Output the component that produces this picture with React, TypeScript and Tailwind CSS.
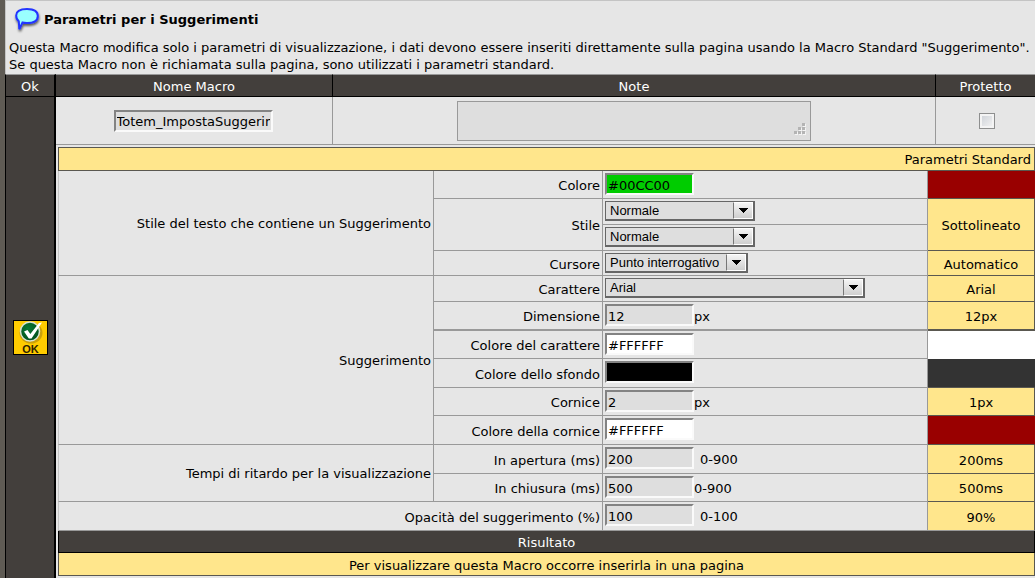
import type { ReactNode } from "react";
import clsx from "clsx";

type Param = {
  id: string;
  label?: string;
  labelSpan?: number;
  wideLabel?: boolean;
  group?: string;
  groupSpan?: number;
  height: string;
  thick?: boolean;
  field: ReactNode;
  standard?: string;
  standardSpan?: number;
  standardColor?: string;
};

type FieldProps = {
  id: string;
  value: string;
  className?: string;
  unit?: string;
  spaced?: boolean;
  label?: string;
};

function TextField({ id, value, className, unit, spaced }: FieldProps) {
  return (
    <div className="flex items-center">
      <input
        id={id}
        type="text"
        defaultValue={value}
        className={clsx(
          "h-[22px] w-[89px] border-2 border-t-[#838383] border-r-[#fafafa] border-b-[#fafafa] border-l-[#838383] px-px pt-0.5 outline-none",
          className ?? "bg-[#dedede]"
        )}
      />
      {unit && <span className={clsx("pt-0.5", spaced && "ml-1.5")}>{unit}</span>}
    </div>
  );
}

function SelectField({ id, value, className, label }: FieldProps) {
  return (
    <div className={clsx("relative", className)}>
      <select
        id={id}
        aria-label={label}
        defaultValue={value}
        className="block h-5 w-full appearance-none border border-r-2 border-b-2 border-[#666] bg-[#dedede] pt-px pl-1 font-['Liberation_Sans',Arial,sans-serif] text-[13px] leading-4 outline-none"
      >
        <option>{value}</option>
      </select>
      <span className="pointer-events-none absolute top-px right-0.5 flex h-[17px] w-5 items-center justify-center border border-white border-l-[#777] bg-linear-to-b from-[#f4f4f4] to-[#cfcfcf]">
        <svg width="9" height="5" viewBox="0 0 9 5" shapeRendering="crispEdges">
          <path d="M0 0h9v1H0zM1 1h7v1H1zM2 2h5v1H2zM3 3h3v1H3zM4 4h1v1H4z" />
        </svg>
      </span>
    </div>
  );
}

const params: Param[] = [
  {
    id: "colore",
    group: "Stile del testo che contiene un Suggerimento",
    groupSpan: 4,
    label: "Colore",
    height: "h-7",
    field: <TextField id="colore" value="#00CC00" className="bg-[#00cc00]" />,
    standardColor: "bg-[#990000] border-[#990000]",
  },
  {
    id: "stile",
    label: "Stile",
    labelSpan: 2,
    height: "h-[26px]",
    field: <SelectField id="stile" value="Normale" className="w-[150px]" />,
    standard: "Sottolineato",
    standardSpan: 2,
  },
  {
    id: "stile2",
    height: "h-[26px]",
    field: (
      <SelectField
        id="stile2"
        value="Normale"
        label="Stile, seconda scelta"
        className="w-[150px]"
      />
    ),
  },
  {
    id: "cursore",
    label: "Cursore",
    height: "h-[25px]",
    field: (
      <SelectField
        id="cursore"
        value="Punto interrogativo"
        className="w-[143px]"
      />
    ),
    standard: "Automatico",
  },
  {
    id: "carattere",
    group: "Suggerimento",
    groupSpan: 6,
    label: "Carattere",
    height: "h-[26px]",
    field: <SelectField id="carattere" value="Arial" className="w-[260px]" />,
    standard: "Arial",
  },
  {
    id: "dimensione",
    label: "Dimensione",
    height: "h-[29px]",
    thick: true,
    field: <TextField id="dimensione" value="12" unit="px" />,
    standard: "12px",
  },
  {
    id: "colore-carattere",
    label: "Colore del carattere",
    height: "h-7",
    field: (
      <TextField id="colore-carattere" value="#FFFFFF" className="bg-white" />
    ),
    standardColor: "bg-white border-white",
  },
  {
    id: "colore-sfondo",
    label: "Colore dello sfondo",
    height: "h-[29px]",
    field: (
      <TextField
        id="colore-sfondo"
        value="#000000"
        className="bg-black text-black"
      />
    ),
    standardColor: "bg-[#333] border-[#333]",
  },
  {
    id: "cornice",
    label: "Cornice",
    height: "h-7",
    field: <TextField id="cornice" value="2" unit="px" />,
    standard: "1px",
  },
  {
    id: "colore-cornice",
    label: "Colore della cornice",
    height: "h-[29px]",
    field: (
      <TextField id="colore-cornice" value="#FFFFFF" className="bg-white" />
    ),
    standardColor: "bg-[#990000] border-[#990000]",
  },
  {
    id: "apertura",
    group: "Tempi di ritardo per la visualizzazione",
    groupSpan: 2,
    label: "In apertura (ms)",
    height: "h-[29px]",
    field: <TextField id="apertura" value="200" unit="0-900" spaced />,
    standard: "200ms",
  },
  {
    id: "chiusura",
    label: "In chiusura (ms)",
    height: "h-7",
    field: <TextField id="chiusura" value="500" unit="0-900" />,
    standard: "500ms",
  },
  {
    id: "opacita",
    label: "Opacità del suggerimento (%)",
    wideLabel: true,
    height: "h-[29px]",
    field: <TextField id="opacita" value="100" unit="0-100" spaced />,
    standard: "90%",
  },
];

function ParamRow({ param }: { param: Param }) {
  const line = param.thick ? "border-b-2" : "border-b";
  const last = param.id === "opacita";

  return (
    <tr className={param.height}>
      {param.group && (
        <th
          scope="rowgroup"
          rowSpan={param.groupSpan}
          className="border-r border-b border-l border-[#999] border-l-[#c4c4c4] pt-px pr-0.5 text-right font-normal"
        >
          {param.group}
        </th>
      )}
      {param.label && (
        <th
          scope="row"
          rowSpan={param.labelSpan}
          colSpan={param.wideLabel ? 2 : 1}
          className={clsx(
            "border-r border-[#999] pt-0.5 pr-0.5 text-right font-normal",
            line,
            param.wideLabel && "border-l border-l-[#c4c4c4]"
          )}
        >
          <label htmlFor={param.id}>{param.label}</label>
        </th>
      )}
      <td className={clsx("border-r border-[#999] pt-0.5 pl-0.5 align-top", line)}>
        {param.field}
      </td>
      {(param.standard || param.standardColor) && (
        <td
          rowSpan={param.standardSpan}
          className={clsx(
            "border-r pt-0.5 text-center",
            line,
            param.standardColor ?? "border-[#5a5850] bg-[#ffe68c]",
            param.standardColor !== "bg-white border-white" && "border-b-[#5a5850]",
            last && "border-b-[#999]"
          )}
        >
          {param.standard}
        </td>
      )}
    </tr>
  );
}

function ParamTable() {
  return (
    <table className="w-full table-fixed border-separate border-spacing-0">
      <colgroup>
        <col className="w-[376px]" />
        <col className="w-[169px]" />
        <col />
        <col className="w-[107px]" />
      </colgroup>
      <thead>
        <tr className="h-6">
          <th
            colSpan={4}
            className="border border-[#5a5850] bg-[#ffe68c] pr-[3px] text-right font-normal"
          >
            Parametri Standard
          </th>
        </tr>
      </thead>
      <tbody>
        {params.map((param) => (
          <ParamRow key={param.id} param={param} />
        ))}
        <tr className="h-[22px]">
          <th
            colSpan={4}
            className="border-r border-b border-l border-black bg-[#433f3c] pt-0.5 font-normal text-white"
          >
            Risultato
          </th>
        </tr>
        <tr className="h-[23px]">
          <td
            colSpan={4}
            className="border-r border-b border-l border-[#5a5850] bg-[#ffe68c] pt-0.5 text-center"
          >
            Per visualizzare questa Macro occorre inserirla in una pagina
          </td>
        </tr>
      </tbody>
    </table>
  );
}

function BubbleIcon() {
  return (
    <svg width="28" height="28" viewBox="0 0 28 28" className="shrink-0">
      <defs>
        <filter id="bubble-shadow" x="-20%" y="-20%" width="150%" height="150%">
          <feDropShadow dx="0.5" dy="2" stdDeviation="1.3" floodOpacity="0.6" />
        </filter>
      </defs>
      <path
        d="M14 3C6.500 3 3.200 5.400 3.200 9.500c0 3 1.100 4.700 2.600 5.800L6.300 23.300l3.200-6.800c1.400.4 2.900.5 4.500.5 7.300 0 10.800-2.800 10.800-7S21.300 3 14 3z"
        fill="#99ffff"
        stroke="#2434ff"
        strokeWidth="2"
        filter="url(#bubble-shadow)"
      />
    </svg>
  );
}

function OkIcon() {
  return (
    <svg width="35" height="35" viewBox="0 0 35 35" className="block">
      <defs>
        <radialGradient id="ok-disc" cx="40%" cy="35%" r="70%">
          <stop offset="0" stopColor="#0a7a35" />
          <stop offset="1" stopColor="#004d1c" />
        </radialGradient>
      </defs>
      <rect x="0.5" y="0.5" width="34" height="34" fill="#ffcc00" stroke="#000" />
      <ellipse cx="18" cy="13" rx="11.500" ry="10.500" fill="#a88410" opacity="0.6" />
      <circle cx="17" cy="11.500" r="9.500" fill="url(#ok-disc)" stroke="#d8e4d0" strokeWidth="1.500" />
      <path d="M11 11.500l3.500-1.500 2.800 4L26 3l3-.5L18.500 18.500h-2.700z" fill="#fff" />
      <text
        x="17.500"
        y="33"
        textAnchor="middle"
        fontFamily="Liberation Sans, Arial, sans-serif"
        fontSize="11"
        fontWeight="bold"
        fill="#2b2200"
      >
        OK
      </text>
    </svg>
  );
}

function ResizeGrip() {
  const dots = [
    [8, 0],
    [4, 4],
    [8, 4],
    [0, 8],
    [4, 8],
    [8, 8],
  ];

  return (
    <svg
      width="13"
      height="12"
      viewBox="0 0 13 12"
      shapeRendering="crispEdges"
      className="pointer-events-none absolute right-1 bottom-1.5"
    >
      {dots.map(([x, y]) => (
        <g key={`${x}-${y}`}>
          <rect x={x + 1} y={y + 1} width="3" height="3" fill="#f4f4f4" />
          <rect x={x} y={y} width="3" height="3" fill="#b4b4b4" />
        </g>
      ))}
    </svg>
  );
}

const headCell =
  "border-t border-r border-b border-black border-t-[#999] bg-[#433f3c] pt-0.5 font-normal text-white";

export default function App() {
  return (
    <div className="flex min-h-screen bg-[#e6e6e6] font-[Verdana,'DejaVu_Sans',sans-serif] text-[13px] leading-[17px] text-black">
      <div className="w-[5px] shrink-0 bg-[#5f5b54]" />
      <main className="flex min-w-0 flex-1 flex-col overflow-hidden">
        <header className="border-t border-l border-[#c4c4c4] pb-px pl-[3px]">
          <div className="flex h-[38px] items-center gap-[3px] pl-1">
            <BubbleIcon />
            <h1 className="pb-0.5 font-bold">Parametri per i Suggerimenti</h1>
          </div>
          <p className="whitespace-nowrap">
            Questa Macro modifica solo i parametri di visualizzazione, i dati
            devono essere inseriti direttamente sulla pagina usando la Macro
            Standard "Suggerimento".
            <br />
            Se questa Macro non è richiamata sulla pagina, sono utilizzati i
            parametri standard.
          </p>
        </header>

        <table className="w-full flex-1 table-fixed border-separate border-spacing-0">
          <colgroup>
            <col className="w-[51px]" />
            <col className="w-[277px]" />
            <col />
            <col className="w-[99px]" />
          </colgroup>
          <thead>
            <tr className="h-[23px]">
              <th className={clsx(headCell, "border-r-2 border-l")}>Ok</th>
              <th className={headCell}>Nome Macro</th>
              <th className={headCell}>Note</th>
              <th className={clsx(headCell, "border-r-0")}>Protetto</th>
            </tr>
          </thead>
          <tbody>
            <tr className="h-12">
              <td
                rowSpan={2}
                className="border-r-2 border-l border-black bg-[#433f3c]"
              >
                <button type="button" aria-label="OK" className="mx-auto block">
                  <OkIcon />
                </button>
              </td>
              <td className="border-r border-b border-[#999] pr-0.5">
                <input
                  type="text"
                  aria-label="Nome Macro"
                  defaultValue="Totem_ImpostaSuggerimenti"
                  className="mx-auto block h-[22px] w-[159px] border-2 border-t-[#838383] border-r-[#fafafa] border-b-[#fafafa] border-l-[#838383] bg-[#dedede] px-px pt-0.5 outline-none"
                />
              </td>
              <td className="border-r border-b border-[#999]">
                <div className="relative mx-auto w-[354px]">
                  <textarea
                    aria-label="Note"
                    className="block h-10 w-full resize-none border border-[#999] bg-[#dedede] outline-none"
                  />
                  <ResizeGrip />
                </div>
              </td>
              <td className="border-b border-[#999] pl-0.5">
                <input
                  type="checkbox"
                  aria-label="Protetto"
                  className="mx-auto block size-4 appearance-none border border-[#8e8f8f] bg-linear-to-br from-[#cbcfd5] to-[#f6f6f6] outline-2 -outline-offset-3 outline-[#f4f4f4]"
                />
              </td>
            </tr>
            <tr>
              <td colSpan={3} className="py-0.5 pl-0.5 align-top">
                <ParamTable />
              </td>
            </tr>
          </tbody>
        </table>
      </main>
    </div>
  );
}
